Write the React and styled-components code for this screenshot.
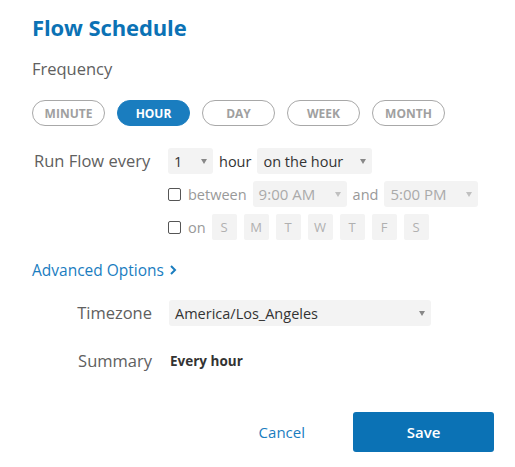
import React from 'react'
import styled, { createGlobalStyle } from 'styled-components'

const GlobalStyle = createGlobalStyle`
  body {
    margin: 0;
    background: #ffffff;
    font-family: 'Open Sans', 'Liberation Sans', sans-serif;
  }
`

const blue = '#0b72b5'

const Container = styled.div`
  width: 515px;
  height: 467px;
  box-sizing: border-box;
  padding: 12px 21px 0 32px;
`

const Title = styled.h1`
  margin: 0;
  color: ${blue};
  font-size: 22px;
  font-weight: 700;
  line-height: 30px;
  letter-spacing: -0.1px;
`

const Label = styled.div`
  color: #606060;
  font-size: 16.5px;
  line-height: 20px;
`

const Frequency = styled(Label)`
  margin-top: 17px;
`

const Pills = styled.div`
  display: flex;
  gap: 12px;
  margin-top: 21px;
`

const Pill = styled.button`
  width: 73px;
  height: 26px;
  box-sizing: border-box;
  border-radius: 13px;
  border: 1px solid ${({ active }) => (active ? '#1a7dbf' : '#a8a8a8')};
  background: ${({ active }) => (active ? '#1a7dbf' : '#ffffff')};
  color: ${({ active }) => (active ? '#ffffff' : '#a0a0a0')};
  font-family: inherit;
  font-size: 12px;
  font-weight: 700;
  padding: 0;
`

const Schedule = styled.div`
  display: grid;
  grid-template-columns: 134px 1fr;
  margin-top: 22px;
  margin-left: 2px;
`

const RunLabel = styled(Label)`
  line-height: 26px;
`

const Rows = styled.div`
  display: flex;
  flex-direction: column;
  gap: 7px;
`

const Row = styled.div`
  display: flex;
  align-items: center;
  gap: 6px;
  height: 26px;
`

const SelectBox = styled.div`
  display: flex;
  align-items: center;
  justify-content: space-between;
  box-sizing: border-box;
  width: ${({ w }) => w}px;
  height: 26px;
  padding: 0 6px;
  background: #f3f3f3;
  border-radius: 3px;
  color: ${({ disabled }) => (disabled ? '#aaaaaa' : '#333333')};
  font-size: ${({ disabled }) => (disabled ? '15px' : '14.5px')};
`

const Caret = styled.span`
  width: 0;
  height: 0;
  border-left: 3px solid transparent;
  border-right: 3px solid transparent;
  border-top: 5px solid ${({ disabled }) => (disabled ? '#c0c0c0' : '#888888')};
`

const Word = styled.span`
  color: ${({ muted }) => (muted ? '#999999' : '#333333')};
  font-size: 14.5px;
`

const Check = styled.span`
  width: 11px;
  height: 11px;
  border: 1px solid #555555;
  border-radius: 2px;
  margin-right: 1px;
`

const Day = styled.span`
  display: flex;
  align-items: center;
  justify-content: center;
  width: 25px;
  height: 26px;
  background: #f3f3f3;
  border-radius: 2px;
  color: #b0b0b0;
  font-size: 13px;
  margin-left: ${({ first }) => (first ? '0' : '1px')};
`

const Advanced = styled.a`
  display: flex;
  align-items: center;
  gap: 5px;
  margin-top: 20px;
  color: #1a7dbf;
  font-size: 15.5px;
  line-height: 20px;
`

const Fields = styled.div`
  display: grid;
  grid-template-columns: 120px 1fr;
  column-gap: 17px;
  row-gap: 25px;
  align-items: center;
  margin-top: 20px;
`

const FieldLabel = styled(Label)`
  text-align: right;
`

const Summary = styled.div`
  color: #333333;
  font-size: 13.5px;
  font-weight: 700;
  padding-left: 1px;
`

const Footer = styled.div`
  display: flex;
  align-items: center;
  justify-content: flex-end;
  gap: 48px;
  margin-top: 41px;
`

const Cancel = styled.a`
  color: #1a7dbf;
  font-size: 15px;
`

const Save = styled.button`
  width: 141px;
  height: 40px;
  background: ${blue};
  color: #ffffff;
  border: none;
  border-radius: 3px;
  font-family: inherit;
  font-size: 15px;
  font-weight: 600;
`

const Select = ({ w, disabled, children }) => (
  <SelectBox w={w} disabled={disabled}>
    <span>{children}</span>
    <Caret disabled={disabled} />
  </SelectBox>
)

const freqs = ['MINUTE', 'HOUR', 'DAY', 'WEEK', 'MONTH']
const days = ['S', 'M', 'T', 'W', 'T', 'F', 'S']

export default function App() {
  return (
    <Container>
      <GlobalStyle />
      <Title>Flow Schedule</Title>
      <Frequency>Frequency</Frequency>
      <Pills>
        {freqs.map((f) => (
          <Pill key={f} active={f === 'HOUR'}>
            {f}
          </Pill>
        ))}
      </Pills>
      <Schedule>
        <RunLabel>Run Flow every</RunLabel>
        <Rows>
          <Row>
            <Select w={45}>1</Select>
            <Word>hour</Word>
            <Select w={115}>on the hour</Select>
          </Row>
          <Row>
            <Check />
            <Word muted>between</Word>
            <Select w={94} disabled>
              9:00 AM
            </Select>
            <Word muted>and</Word>
            <Select w={94} disabled>
              5:00 PM
            </Select>
          </Row>
          <Row>
            <Check />
            <Word muted>on</Word>
            {days.map((d, i) => (
              <Day key={i} first={i === 0}>
                {d}
              </Day>
            ))}
          </Row>
        </Rows>
      </Schedule>
      <Advanced>
        Advanced Options
        <svg width="8" height="10" viewBox="0 0 8 10">
          <path d="M2 1l4 4-4 4" fill="none" stroke="#1a7dbf" strokeWidth="2" />
        </svg>
      </Advanced>
      <Fields>
        <FieldLabel>Timezone</FieldLabel>
        <Select w={262}>America/Los_Angeles</Select>
        <FieldLabel>Summary</FieldLabel>
        <Summary>Every hour</Summary>
      </Fields>
      <Footer>
        <Cancel>Cancel</Cancel>
        <Save>Save</Save>
      </Footer>
    </Container>
  )
}
